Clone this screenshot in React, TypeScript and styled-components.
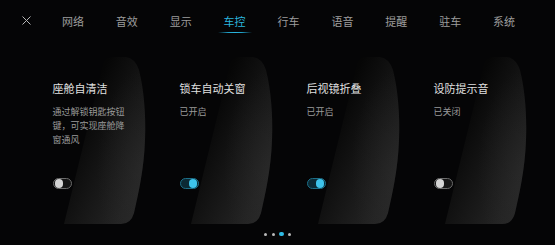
import React from 'react';
import styled, { createGlobalStyle } from 'styled-components';

const GlobalStyle = createGlobalStyle`
  html, body {
    margin: 0;
    padding: 0;
    background: #050506;
  }
  body {
    font-family: "Noto Sans CJK SC", "Noto Sans", sans-serif;
  }
`;

const Screen = styled.div`
  width: 555px;
  height: 245px;
  background: #050506;
  display: flex;
  flex-direction: column;
  overflow: hidden;
`;

const Header = styled.header`
  height: 40px;
  display: flex;
  align-items: center;
  padding: 1px 0 0 22px;
  box-sizing: border-box;
`;

const CloseButton = styled.button`
  width: 9px;
  height: 9px;
  padding: 0;
  margin-right: 15px;
  border: none;
  background: transparent;
  display: flex;
  > svg { display: block; }
`;

const Tabs = styled.nav`
  display: flex;
`;

const Tab = styled.div<{ $active?: boolean }>`
  position: relative;
  width: 53.9px;
  text-align: center;
  font-size: 11px;
  line-height: 16px;
  color: ${p => (p.$active ? '#2bb6de' : '#9d9d9d')};
  &::after {
    content: '';
    display: ${p => (p.$active ? 'block' : 'none')};
    position: absolute;
    left: 10px;
    right: 10px;
    top: 19px;
    height: 1.5px;
    background: linear-gradient(90deg, rgba(43,182,222,0), #1f9fc6 30%, #2bb6de 50%, #1f9fc6 70%, rgba(43,182,222,0));
  }
`;

const Cards = styled.main`
  display: flex;
  margin: 15px 0 0 40px;
`;

const Card = styled.section`
  position: relative;
  width: 127px;
  height: 170px;
  box-sizing: border-box;
  padding: 26px 0 36px 12.5px;
  display: flex;
  flex-direction: column;
  &::before {
    content: '';
    position: absolute;
    inset: 0;
    clip-path: path('M 24 169 L 63 9 Q 65 2 73 2 L 86 2 Q 95 3 99 15 C 104 35 106 60 105 85 C 104 115 98 140 94 158 Q 91 169 81 169 Z');
    background:
      radial-gradient(ellipse 45px 100px at 102px 115px, rgba(50,50,50,0.35), rgba(50,50,50,0) 100%),
      linear-gradient(115deg, #060606 34%, #151515 55%, #232323 75%, #2d2d2d 100%);
  }
`;

const Title = styled.h3`
  position: relative;
  margin: 0;
  font-size: 11px;
  line-height: 14px;
  font-weight: 400;
  color: #e0e0e0;
`;

const Desc = styled.p`
  position: relative;
  margin: 9.5px 0 0;
  width: 76px;
  font-size: 9px;
  line-height: 14.3px;
  color: #9a9a9a;
`;

const Toggle = styled.div<{ $on?: boolean }>`
  position: relative;
  margin-top: auto;
  width: 19.5px;
  height: 11.5px;
  box-sizing: border-box;
  border-radius: 6px;
  border: 1px solid ${p => (p.$on ? '#1c6f88' : '#6b6b6b')};
  background: ${p => (p.$on ? '#0b2a35' : '#141414')};
  display: flex;
  align-items: center;
  justify-content: ${p => (p.$on ? 'flex-end' : 'flex-start')};
  padding: 0 1px;
  &::after {
    content: '';
    width: 8.5px;
    height: 8.5px;
    border-radius: 50%;
    background: ${p => (p.$on ? '#3ec3ea' : '#d4d4d4')};
  }
`;

const Dots = styled.div`
  height: 18px;
  display: flex;
  justify-content: center;
  align-items: center;
`;

const Dot = styled.span<{ $active?: boolean }>`
  width: 8px;
  display: flex;
  justify-content: center;
  &::after {
    content: '';
    width: ${p => (p.$active ? '4.5px' : '3px')};
    height: ${p => (p.$active ? '4.5px' : '3px')};
    border-radius: 50%;
    background: ${p => (p.$active ? '#2fbbe4' : '#b9b9b9')};
  }
`;

const tabs = ['网络', '音效', '显示', '车控', '行车', '语音', '提醒', '驻车', '系统'];

const cards = [
  { title: '座舱自清洁', desc: '通过解锁钥匙按钮键，可实现座舱降窗通风', on: false },
  { title: '锁车自动关窗', desc: '已开启', on: true },
  { title: '后视镜折叠', desc: '已开启', on: true },
  { title: '设防提示音', desc: '已关闭', on: false },
];

export default function App() {
  return (
    <Screen>
      <GlobalStyle />
      <Header>
        <CloseButton aria-label="关闭">
          <svg width="9" height="9" viewBox="0 0 9 9">
            <path d="M0.5 0.5 L8.5 8.5 M8.5 0.5 L0.5 8.5" stroke="#b5b5b5" strokeWidth="1" fill="none" />
          </svg>
        </CloseButton>
        <Tabs>
          {tabs.map(t => (
            <Tab key={t} $active={t === '车控'}>{t}</Tab>
          ))}
        </Tabs>
      </Header>
      <Cards>
        {cards.map(c => (
          <Card key={c.title}>
            <Title>{c.title}</Title>
            <Desc>{c.desc}</Desc>
            <Toggle $on={c.on} />
          </Card>
        ))}
      </Cards>
      <Dots>
        <Dot />
        <Dot />
        <Dot $active />
        <Dot />
      </Dots>
    </Screen>
  );
}
